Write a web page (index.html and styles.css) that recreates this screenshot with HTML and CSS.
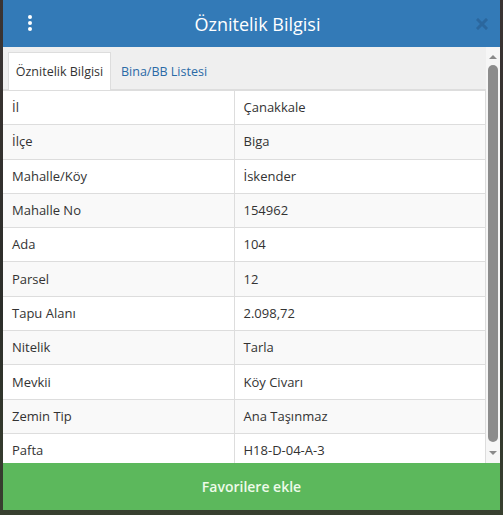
FILE: index.html
```html
<!DOCTYPE html>
<html lang="tr">
<head>
<meta charset="utf-8">
<title>Öznitelik Bilgisi</title>
<link rel="stylesheet" href="styles.css">
</head>
<body>
<div class="frame">
  <div class="dialog">
    <div class="header">
      <div class="menu-btn"><span></span><span></span><span></span></div>
      <div class="title">Öznitelik Bilgisi</div>
      <div class="close-btn">
        <svg width="12" height="12" viewBox="0 0 12 12"><path d="M2 2 L10 10 M10 2 L2 10" stroke="#2b659c" stroke-width="3" stroke-linecap="square"/></svg>
      </div>
    </div>
    <div class="scroll-area">
      <div class="content">
        <div class="tabs">
          <div class="tab active">Öznitelik Bilgisi</div>
          <div class="tab">Bina/BB Listesi</div>
        </div>
        <table class="attr-table">
          <tbody>
            <tr><td>İl</td><td>Çanakkale</td></tr>
            <tr><td>İlçe</td><td>Biga</td></tr>
            <tr><td>Mahalle/Köy</td><td>İskender</td></tr>
            <tr><td>Mahalle No</td><td>154962</td></tr>
            <tr><td>Ada</td><td>104</td></tr>
            <tr><td>Parsel</td><td>12</td></tr>
            <tr><td>Tapu Alanı</td><td>2.098,72</td></tr>
            <tr><td>Nitelik</td><td>Tarla</td></tr>
            <tr><td>Mevkii</td><td>Köy Civarı</td></tr>
            <tr><td>Zemin Tip</td><td>Ana Taşınmaz</td></tr>
            <tr><td>Pafta</td><td>H18-D-04-A-3</td></tr>
          </tbody>
        </table>
      </div>
      <div class="scrollbar">
        <div class="arrow up"></div>
        <div class="thumb"></div>
        <div class="arrow down"></div>
      </div>
    </div>
    <div class="fav-btn">Favorilere ekle</div>
  </div>
</div>
</body>
</html>
```
FILE: styles.css
```css
html, body {
  margin: 0;
  padding: 0;
}
body {
  background: #2e2f2c;
  font-family: "Open Sans", "Noto Sans", sans-serif;
  color: #333;
}
.frame {
  width: 503px;
  height: 515px;
  padding: 0 3px 5px 3px;
  box-sizing: border-box;
  background: linear-gradient(180deg, #3b3433 0%, #2c2e2a 60%, #38402f 100%);
}
.dialog {
  width: 497px;
  height: 510px;
  display: flex;
  flex-direction: column;
  background: #efefef;
}
.header {
  height: 47px;
  flex: none;
  background: #337ab7;
  display: flex;
  align-items: center;
  padding: 0 12px 0 22px;
}
.menu-btn {
  width: 10px;
  display: flex;
  flex-direction: column;
  align-items: center;
  gap: 2px;
  margin-top: -1px;
}
.menu-btn span {
  width: 4px;
  height: 4px;
  border-radius: 50%;
  background: #fff;
}
.title {
  flex: 1;
  text-align: center;
  color: #fff;
  font-size: 18px;
  line-height: 24px;
  padding-left: 4px;
}
.close-btn {
  width: 12px;
  height: 12px;
  display: flex;
  opacity: 0.9;
}
.scroll-area {
  height: 416px;
  flex: none;
  display: flex;
}
.content {
  flex: 1;
  overflow: hidden;
  background: #efefef;
}
.tabs {
  display: flex;
  padding: 5px 0 0 5px;
  border-bottom: 1px solid #dddddd;
  height: 37px;
}
.tab {
  height: 37px;
  box-sizing: border-box;
  padding: 0 10px 0 10px;
  display: flex;
  align-items: center;
  font-size: 12.5px;
  color: #2a6aa6;
  padding-top: 1px;
}
.tab.active {
  background: #fff;
  color: #333;
  border: 1px solid #dddddd;
  border-bottom: none;
  height: 38px;
  width: 103px;
  justify-content: center;
  padding: 0;
}
.attr-table {
  width: 100%;
  border-collapse: collapse;
  background: #fff;
  font-size: 13px;
}
.attr-table td {
  border: 1px solid #dddddd;
  padding: 0 8px 1px 9px;
  height: 34.3px;
  box-sizing: border-box;
  line-height: 20px;
  vertical-align: middle;
}
.attr-table td:first-child {
  width: 231px;
  border-left: none;
}
.attr-table tr:nth-child(even) td {
  background: #f9f9f9;
}
.scrollbar {
  width: 14px;
  flex: none;
  background: #f6f6f6;
  display: flex;
  flex-direction: column;
  align-items: center;
  padding: 8px 0 8px 0;
  box-sizing: border-box;
}
.arrow {
  width: 0;
  height: 0;
  border-left: 4px solid transparent;
  border-right: 4px solid transparent;
}
.arrow.up {
  border-bottom: 4px solid #8a8a8a;
}
.arrow.down {
  border-top: 4px solid #8a8a8a;
}
.thumb {
  width: 10px;
  flex: 1;
  margin: 6px 0 9px 0;
  background: #8c8c8c;
  border-radius: 5px;
}
.fav-btn {
  height: 47px;
  flex: none;
  background: #5cb85c;
  color: #eefbe9;
  display: flex;
  align-items: center;
  justify-content: center;
  font-size: 14px;
  font-weight: 600;
}
```
